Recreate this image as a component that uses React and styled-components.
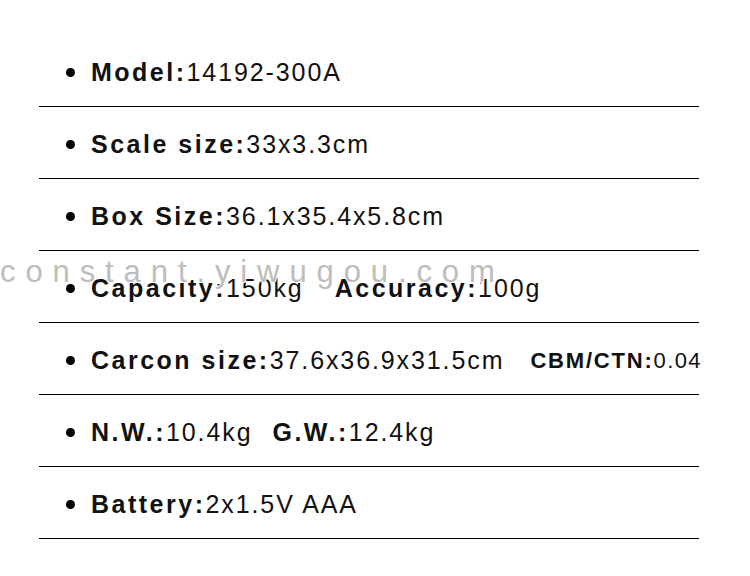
import React from "react";
import styled, { createGlobalStyle } from "styled-components";

const GlobalStyle = createGlobalStyle`
  body {
    margin: 0;
    background: #fff;
    font-family: "Liberation Sans", Arial, sans-serif;
    color: #111;
  }
`;

const Page = styled.div`
  position: relative;
  width: 750px;
  height: 576px;
  overflow: hidden;
  background: #fff;
`;

const SpecList = styled.ul`
  list-style: none;
  margin: 0 0 0 39px;
  padding: 35px 0 0 0;
  width: 660px;
`;

const SpecRow = styled.li`
  display: flex;
  align-items: center;
  box-sizing: border-box;
  height: 72px;
  padding: 4px 0 0 27px;
  border-bottom: 1px solid #000;
  white-space: nowrap;
`;

const Bullet = styled.span`
  width: 9px;
  height: 9px;
  border-radius: 50%;
  background: #000;
  flex: none;
  margin: 0 16px 0 0;
`;

const Item = styled.span`
  display: inline-flex;
  align-items: baseline;
  margin-left: ${(p) => p.$gap || 0}px;
  font-size: ${(p) => p.$size || 25}px;
`;

const Label = styled.span`
  font-weight: 700;
  letter-spacing: ${(p) => (p.$small ? 1.8 : 2.5)}px;
`;

const Value = styled.span`
  font-weight: 400;
  letter-spacing: ${(p) => (p.$small ? 1.4 : 1.9)}px;
`;

const Watermark = styled.div`
  position: absolute;
  left: 0;
  top: 256px;
  font-size: 31px;
  line-height: 31px;
  letter-spacing: 9.9px;
  color: #bdbdbd;
  white-space: nowrap;
  text-shadow: 1px 0 0 #fff, -1px 0 0 #fff, 0 1px 0 #fff, 0 -1px 0 #fff;
  pointer-events: none;
`;

const specs = [
  [{ label: "Model:", value: "14192-300A" }],
  [{ label: "Scale size:", value: "33x3.3cm" }],
  [{ label: "Box Size:", value: "36.1x35.4x5.8cm" }],
  [
    { label: "Capacity:", value: "150kg" },
    { label: "Accuracy:", value: "100g", gap: 31 },
  ],
  [
    { label: "Carcon size:", value: "37.6x36.9x31.5cm" },
    { label: "CBM/CTN:", value: "0.04", gap: 26, size: 22, small: true },
  ],
  [
    { label: "N.W.:", value: "10.4kg" },
    { label: "G.W.:", value: "12.4kg", gap: 20 },
  ],
  [{ label: "Battery:", value: "2x1.5V AAA" }],
];

export default function App() {
  return (
    <Page>
      <GlobalStyle />
      <SpecList>
        {specs.map((row, i) => (
          <SpecRow key={i}>
            <Bullet />
            {row.map((it) => (
              <Item key={it.label} $gap={it.gap} $size={it.size}>
                <Label $small={it.small}>{it.label}</Label>
                <Value $small={it.small}>{it.value}</Value>
              </Item>
            ))}
          </SpecRow>
        ))}
      </SpecList>
      <Watermark>constant.yiwugou.com</Watermark>
    </Page>
  );
}
